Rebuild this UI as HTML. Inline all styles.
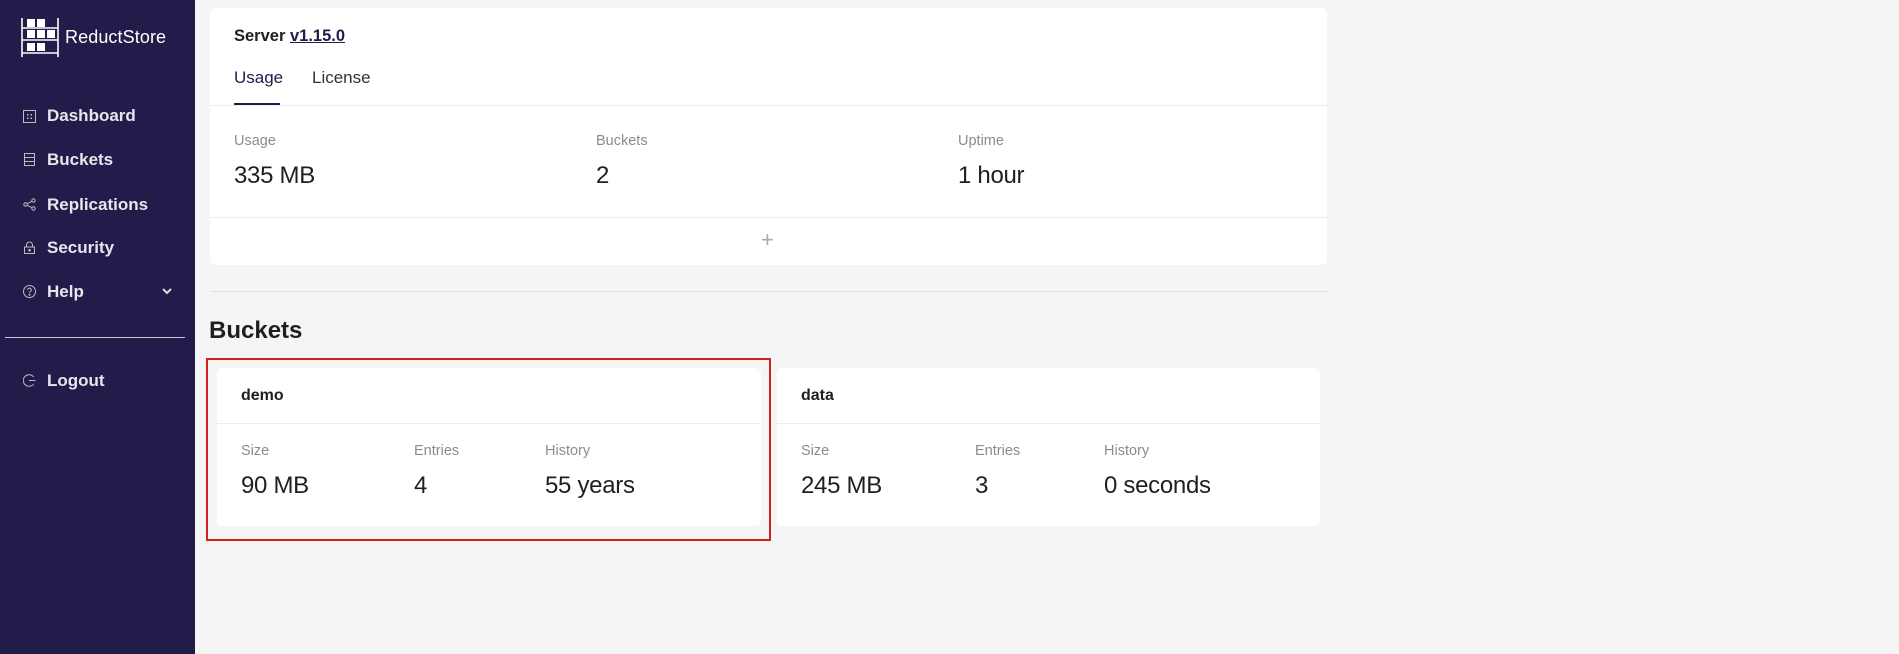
<!DOCTYPE html>
<html><head><style>
*{margin:0;padding:0;box-sizing:border-box}
body{width:1899px;height:654px;background:#f5f5f5;font-family:"Liberation Sans",sans-serif;position:relative;overflow:hidden;color:#1f1f1f}
.sb{position:absolute;left:0;top:0;width:195px;height:654px;background:#221c4a}
.abs{position:absolute}
.nav{position:absolute;left:47px;color:#e6e6ee;font-weight:bold;font-size:17px;line-height:20px}
.ic{position:absolute;left:23px;width:13px;height:13px}
.card{position:absolute;background:#fff;border-radius:6px}
.lbl{position:absolute;font-size:14.5px;color:#8c8c8c;line-height:18px}
.val{position:absolute;font-size:24px;color:#1f1f1f;line-height:28px;letter-spacing:-0.3px}
.hr{position:absolute;height:1px;background:#ececec}
</style></head><body>
<div class="sb">
<svg class="abs" style="left:20px;top:18px" width="40" height="40" viewBox="0 0 40 40" fill="none" stroke="#fff" stroke-width="1.6">
<line x1="2" y1="0" x2="2" y2="39"/><line x1="38" y1="0" x2="38" y2="39"/>
<line x1="2" y1="10" x2="38" y2="10"/><line x1="2" y1="22" x2="38" y2="22"/><line x1="2" y1="35" x2="38" y2="35"/>
<g fill="#fff" stroke="none"><rect x="7" y="1" width="8" height="8"/><rect x="17" y="1" width="8" height="8"/>
<rect x="7" y="12" width="8" height="8"/><rect x="17" y="12" width="8" height="8"/><rect x="27" y="12" width="8" height="8"/>
<rect x="7" y="25" width="8" height="8"/><rect x="17" y="25" width="8" height="8"/></g></svg>
<div class="abs" style="left:65px;top:27px;color:#fff;font-size:18px;letter-spacing:0.1px">ReductStore</div>

<svg class="ic" style="top:110px" viewBox="0 0 13 13" fill="none" stroke="#bbb"><rect x="0.5" y="0.5" width="12" height="12"/><g fill="#bbb" stroke="none"><rect x="4" y="4" width="1.5" height="1.5"/><rect x="7.5" y="4" width="1.5" height="1.5"/><rect x="4" y="7.5" width="1.5" height="1.5"/><rect x="7.5" y="7.5" width="1.5" height="1.5"/></g></svg>
<div class="nav" style="top:106px">Dashboard</div>
<svg class="ic" style="top:153px" viewBox="0 0 13 13" fill="none" stroke="#bbb"><rect x="1.5" y="0.5" width="10" height="12"/><line x1="1.5" y1="4.5" x2="11.5" y2="4.5"/><line x1="1.5" y1="8.5" x2="11.5" y2="8.5"/></svg>
<div class="nav" style="top:150px">Buckets</div>
<svg class="ic" style="top:198px" viewBox="0 0 13 13" fill="none" stroke="#bbb"><circle cx="2.5" cy="6.5" r="1.7"/><circle cx="10.5" cy="2.5" r="1.7"/><circle cx="10.5" cy="10.5" r="1.7"/><line x1="4" y1="5.7" x2="9" y2="3.3"/><line x1="4" y1="7.3" x2="9" y2="9.7"/></svg>
<div class="nav" style="top:195px">Replications</div>
<svg class="ic" style="top:241px" viewBox="0 0 13 13" fill="none" stroke="#bbb"><rect x="1.5" y="6" width="10" height="6.5"/><path d="M3.5 6V4a3 3 0 0 1 6 0v2"/><circle cx="6.5" cy="9.2" r="0.8" fill="#bbb"/></svg>
<div class="nav" style="top:238px">Security</div>
<svg class="ic" style="top:285px" viewBox="0 0 13 13" fill="none" stroke="#bbb"><circle cx="6.5" cy="6.5" r="6"/><path d="M4.7 5a1.8 1.8 0 1 1 2.5 1.6c-.5.3-.7.6-.7 1.2"/><circle cx="6.5" cy="9.8" r="0.5" fill="#bbb"/></svg>
<div class="nav" style="top:282px">Help</div>
<svg class="abs" style="left:162px;top:288px" width="10" height="7" viewBox="0 0 10 7" fill="none" stroke="#ddd" stroke-width="2"><path d="M1 1l4 4 4-4"/></svg>
<div class="abs" style="left:5px;top:337px;width:180px;height:1px;background:#c8c6d6"></div>
<svg class="ic" style="top:374px" viewBox="0 0 13 13" fill="none" stroke="#bbb"><path d="M10.7 3a5.8 5.8 0 1 0 0 7"/><line x1="6" y1="6.5" x2="12.5" y2="6.5"/></svg>
<div class="nav" style="top:371px">Logout</div>
</div>

<div class="card" style="left:210px;top:8px;width:1117px;height:257px">
<div class="abs" style="left:24px;top:19px;font-size:16.5px;font-weight:bold">Server <span style="text-decoration:underline;color:#221c4a">v1.15.0</span></div>
<div class="abs" style="left:24px;top:60px;font-size:17px;color:#221c4a">Usage</div>
<div class="abs" style="left:102px;top:60px;font-size:17px;color:#333">License</div>
<div class="abs" style="left:24px;top:95px;width:46px;height:3px;background:#221c4a"></div>
<div class="hr" style="left:0;top:97px;width:1117px"></div>
<div class="lbl" style="left:24px;top:124px">Usage</div><div class="val" style="left:24px;top:154px">335 MB</div>
<div class="lbl" style="left:386px;top:124px">Buckets</div><div class="val" style="left:386px;top:154px">2</div>
<div class="lbl" style="left:748px;top:124px">Uptime</div><div class="val" style="left:748px;top:154px">1 hour</div>
<div class="hr" style="left:0;top:209px;width:1117px"></div>
<div class="abs" style="left:551px;top:219px;font-size:22px;color:#aaa;font-weight:300">+</div>
</div>
<div class="abs" style="left:210px;top:291px;width:1117px;height:1px;background:#e0e0e0"></div>
<div class="abs" style="left:209px;top:317px;font-size:24px;font-weight:bold">Buckets</div>

<div class="abs" style="left:206px;top:358px;width:565px;height:183px;border:2px solid #d42020"></div>
<div class="card" style="left:217px;top:368px;width:544px;height:158px">
<div class="abs" style="left:24px;top:19px;font-size:16px;font-weight:bold">demo</div>
<div class="hr" style="left:0;top:55px;width:544px"></div>
<div class="lbl" style="left:24px;top:74px">Size</div><div class="val" style="left:24px;top:104px">90 MB</div>
<div class="lbl" style="left:197px;top:74px">Entries</div><div class="val" style="left:197px;top:104px">4</div>
<div class="lbl" style="left:328px;top:74px">History</div><div class="val" style="left:328px;top:104px">55 years</div>
</div>
<div class="card" style="left:777px;top:368px;width:543px;height:158px">
<div class="abs" style="left:24px;top:19px;font-size:16px;font-weight:bold">data</div>
<div class="hr" style="left:0;top:55px;width:543px"></div>
<div class="lbl" style="left:24px;top:74px">Size</div><div class="val" style="left:24px;top:104px">245 MB</div>
<div class="lbl" style="left:198px;top:74px">Entries</div><div class="val" style="left:198px;top:104px">3</div>
<div class="lbl" style="left:327px;top:74px">History</div><div class="val" style="left:327px;top:104px">0 seconds</div>
</div>
</body></html>
